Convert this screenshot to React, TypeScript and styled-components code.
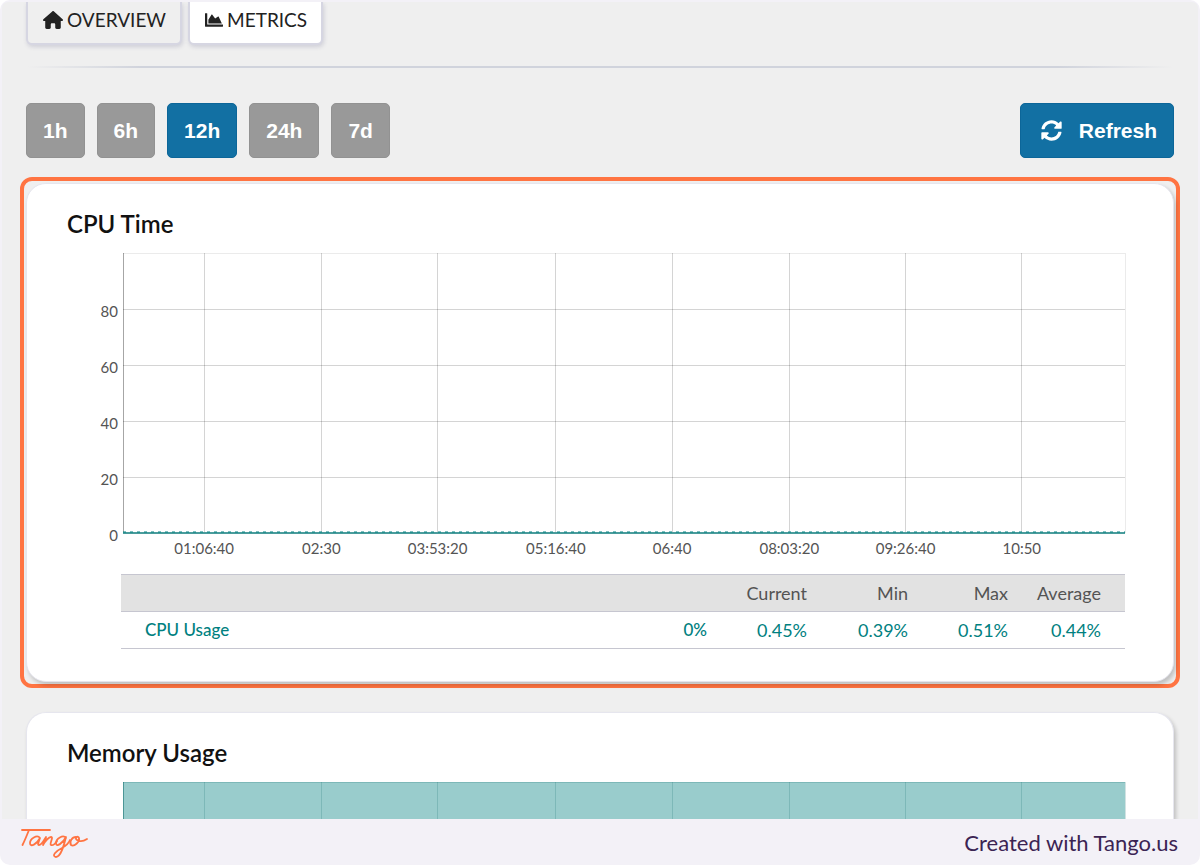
import React from "react";
import styled, { createGlobalStyle } from "styled-components";
import { FaChartArea, FaSyncAlt } from "react-icons/fa";
import { FaHouse } from "react-icons/fa6";

const GlobalStyle = createGlobalStyle`
  * { box-sizing: border-box; }
  body { margin: 0; background: #fff; font-family: Lato, "Open Sans", sans-serif; color: #1c1c1c; }
`;

const Frame = styled.div`
  display: flex;
  flex-direction: column;
  min-height: 100vh;
  padding: 2px 2px 0;
  background: #f3f1f7;
  border-radius: 10px;
`;

const Screen = styled.main`
  flex: 1;
  padding: 0 18px;
  background: #efefef;
  border-radius: 6px 6px 0 0;
  overflow: hidden;
`;

const Tabs = styled.nav`
  display: flex;
  gap: 6px;
  padding: 0 6px;
`;

const Tab = styled.a<{ $active?: boolean }>`
  display: flex;
  align-items: center;
  gap: 4px;
  height: 43px;
  padding: 0 14px 6px 15px;
  border: 2px solid #d6d6e2;
  border-top: 0;
  border-radius: 0 0 6px 6px;
  box-shadow: 1px 2px 4px rgba(60, 60, 110, 0.18);
  background: ${(p) => (p.$active ? "#fff" : "#efefef")};
  color: #222;
  font-size: 19px;
  text-decoration: none;
`;

const Divider = styled.hr`
  height: 2px;
  margin: 21px 7px 0;
  border: 0;
  background: linear-gradient(to right, transparent, #d0d3dc 10%, #d0d3dc 90%, transparent);
`;

const Toolbar = styled.div`
  display: flex;
  justify-content: space-between;
  margin: 35px 6px 19px;
`;

const Ranges = styled.div`
  display: flex;
  gap: 12px;
`;

const Button = styled.button<{ $primary?: boolean }>`
  display: flex;
  align-items: center;
  gap: 17px;
  height: 55px;
  padding: 0 16px;
  border: 1px solid ${(p) => (p.$primary ? "#0c6699" : "#929292")};
  border-radius: 5px;
  background: ${(p) => (p.$primary ? "#1270a3" : "#999")};
  color: #fff;
  font: bold 21px "Liberation Sans", Arial, sans-serif;
`;

const RefreshButton = styled(Button)`
  padding-left: 20px;
`;

const Highlight = styled.div`
  padding: 2px;
  border: 4px solid #ff7442;
  border-radius: 12px;
`;

const Card = styled.section<{ $cut?: boolean }>`
  padding: 26px 48px ${(p) => (p.$cut ? 0 : 32)}px 40px;
  background: #fff;
  border: 1px solid #e6e6ee;
  border-bottom-width: ${(p) => (p.$cut ? 0 : 1)}px;
  border-radius: ${(p) => (p.$cut ? "20px 20px 0 0" : "20px")};
  box-shadow: 2px 3px 4px rgba(0, 0, 0, 0.2);
`;

const NextCard = styled.div`
  margin: 24px 6px 0;
`;

const CardTitle = styled.h2`
  margin: 0 0 15px;
  font-size: 24px;
  font-weight: 600;
  line-height: 28px;
  color: #111;
`;

const ChartBox = styled.div`
  padding-left: 56px;
`;

const Plot = styled.svg`
  display: block;
  width: 100%;
  overflow: visible;
  font-size: 15px;
  fill: #545454;
`;

const StatsBox = styled.div`
  padding-left: 54px;
`;

const Stats = styled.table`
  width: 100%;
  table-layout: fixed;
  border-collapse: collapse;
  font-size: 18px;
  line-height: 20px;
  color: #008080;

  th, td {
    height: 37px;
    padding: 0 24px 0 0;
    border-top: 1px solid #c6c6d0;
    border-bottom: 1px solid #c6c6d0;
    text-align: right;
    font-weight: 400;
  }
  thead th { background: #e2e2e2; color: #545454; }
  tbody th { padding-left: 24px; text-align: left; }
  tbody th, tbody td:nth-child(2) { font-size: 17px; font-weight: 500; }
`;

const Col = styled.col<{ $w?: number }>`
  width: ${(p) => (p.$w ? `${p.$w}px` : "auto")};
`;

const Footer = styled.footer`
  display: flex;
  align-items: center;
  justify-content: space-between;
  height: 46px;
  padding: 0 20px 0 18px;
  color: #3b2453;
  font-size: 22px;
`;

const ticks = [
  { at: "8.1%", label: "01:06:40" },
  { at: "19.8%", label: "02:30" },
  { at: "31.4%", label: "03:53:20" },
  { at: "43.2%", label: "05:16:40" },
  { at: "54.8%", label: "06:40" },
  { at: "66.5%", label: "08:03:20" },
  { at: "78.1%", label: "09:26:40" },
  { at: "89.7%", label: "10:50" },
];

const levels = [
  { y: 56, label: 80 },
  { y: 112, label: 60 },
  { y: 168, label: 40 },
  { y: 224, label: 20 },
  { y: 280, label: 0 },
];

function CpuChart() {
  return (
    <Plot height="321" role="img" aria-label="CPU time over the last 12 hours">
      <g stroke="#000" strokeOpacity="0.17" strokeWidth="1" shapeRendering="crispEdges">
        <line x1="0" x2="100%" y1="0.5" y2="0.5" strokeOpacity="0.08" />
        <line x1="100%" x2="100%" y1="0" y2="280" strokeOpacity="0.08" />
        {ticks.map((t) => <line key={t.at} x1={t.at} x2={t.at} y1="0" y2="280" />)}
        {levels.map((l) => <line key={l.y} x1="0" x2="100%" y1={l.y} y2={l.y} />)}
        <line x1="0.5" x2="0.5" y1="0" y2="280" strokeOpacity="0.35" />
      </g>
      <line x1="0" x2="100%" y1="280" y2="280" stroke="#4a9c9c" strokeWidth="2" />
      <line x1="0" x2="100%" y1="279" y2="279" stroke="#008080" strokeWidth="1" strokeDasharray="3 4" />
      {levels.map((l) => <text key={l.y} x="-5" y={l.y + 8} textAnchor="end">{l.label}</text>)}
      {ticks.map((t) => <text key={t.at} x={t.at} y="301" textAnchor="middle">{t.label}</text>)}
    </Plot>
  );
}

function MemoryChart() {
  return (
    <Plot height="37" role="img" aria-label="Memory usage over the last 12 hours">
      <rect width="100%" height="37" fill="#99cccc" />
      <g stroke="#006060" strokeOpacity="0.18" shapeRendering="crispEdges">
        <line x1="0" x2="100%" y1="0.5" y2="0.5" />
        {ticks.map((t) => <line key={t.at} x1={t.at} x2={t.at} y1="0" y2="37" strokeWidth="1" />)}
        <line x1="100%" x2="100%" y1="0" y2="37" />
        <line x1="0.5" x2="0.5" y1="0" y2="37" strokeOpacity="0.5" />
      </g>
    </Plot>
  );
}

function TangoLogo() {
  return (
    <svg width="70" height="34" viewBox="0 0 70 34" role="img" aria-label="Tango" fill="none" stroke="#ff7442" strokeWidth="1.8" strokeLinecap="round" strokeLinejoin="round">
      <path d="M2 5H30" />
      <path d="M9 5C7 10 5 15 2.500 20" />
      <path d="M20 13C17 9 10 14 10 18C10 23 17 19 20 13C19 16 17 20 19 20C22 20 24 15 26 12C26 15 24 18 23 20C25 16 29 12 31 12C34 12 29 19 31 20C33 21 36 18 37 16" />
      <path d="M46 13C43 9 36 14 36 18C36 23 43 18 46 12C44 20 41 32 36 32C31 31 36 26 42 23C47 20 49 18 50 15" />
      <path d="M56 12C52 12 49 17 51 20C54 22 60 17 59 13C58 10 54 13 57 15C60 17 64 16 67 14" />
    </svg>
  );
}

export default function App() {
  return (
    <>
      <GlobalStyle />
      <Frame>
        <Screen>
          <Tabs>
            <Tab href="#overview"><FaHouse size={20} />OVERVIEW</Tab>
            <Tab href="#metrics" $active><FaChartArea size={18} />METRICS</Tab>
          </Tabs>
          <Divider />
          <Toolbar>
            <Ranges>
              {["1h", "6h", "12h", "24h", "7d"].map((r) => (
                <Button key={r} type="button" $primary={r === "12h"}>{r}</Button>
              ))}
            </Ranges>
            <RefreshButton type="button" $primary><FaSyncAlt size={21} />Refresh</RefreshButton>
          </Toolbar>
          <Highlight>
            <Card>
              <CardTitle>CPU Time</CardTitle>
              <ChartBox><CpuChart /></ChartBox>
              <StatsBox>
                <Stats>
                  <colgroup>
                    <Col /><Col $w={100} /><Col $w={100} /><Col $w={101} /><Col $w={100} /><Col $w={93} />
                  </colgroup>
                  <thead>
                    <tr>
                      <th /><th />
                      <th scope="col">Current</th>
                      <th scope="col">Min</th>
                      <th scope="col">Max</th>
                      <th scope="col">Average</th>
                    </tr>
                  </thead>
                  <tbody>
                    <tr>
                      <th scope="row">CPU Usage</th>
                      <td>0%</td><td>0.45%</td><td>0.39%</td><td>0.51%</td><td>0.44%</td>
                    </tr>
                  </tbody>
                </Stats>
              </StatsBox>
            </Card>
          </Highlight>
          <NextCard>
            <Card $cut>
              <CardTitle>Memory Usage</CardTitle>
              <ChartBox><MemoryChart /></ChartBox>
            </Card>
          </NextCard>
        </Screen>
        <Footer>
          <TangoLogo />
          <span>Created with Tango.us</span>
        </Footer>
      </Frame>
    </>
  );
}
